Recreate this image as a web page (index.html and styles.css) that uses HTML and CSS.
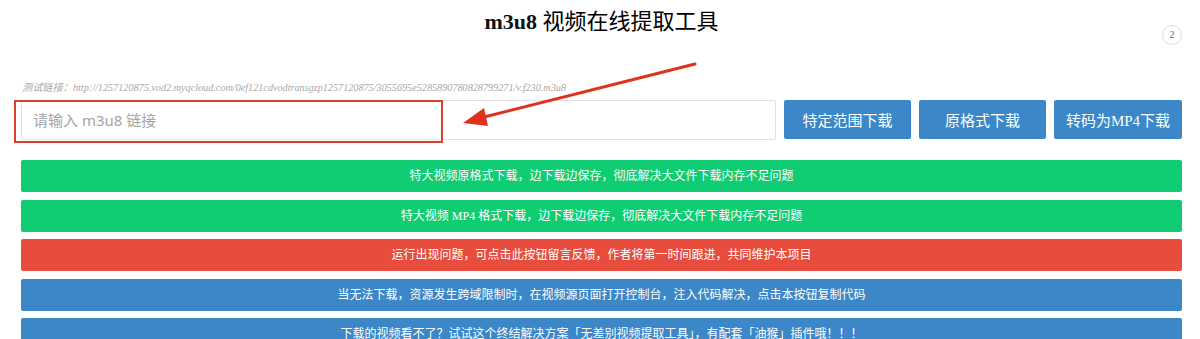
FILE: index.html
```html
<!DOCTYPE html>
<html lang="zh-CN">

<head>
    <meta charset="UTF-8">
    <title>m3u8 视频在线提取工具</title>
    <link rel="stylesheet" href="styles.css">
</head>

<body>
    <div class="page">
        <div class="header">
            <h1 class="title">m3u8 <span class="title-cn">视频在线提取工具</span></h1>
            <span class="badge">2</span>
        </div>

        <p class="test-link">测试链接：http://1257120875.vod2.myqcloud.com/0ef121cdvodtransgzp1257120875/3055695e5285890780828799271/v.f230.m3u8</p>

        <!-- 输入框 + 三个下载按钮 -->
        <div class="search-row">
            <input class="url-input" type="text" placeholder="请输入 m3u8 链接">
            <button class="btn">特定范围下载</button>
            <button class="btn">原格式下载</button>
            <button class="btn">转码为MP4下载</button>
        </div>

        <div class="bars">
            <div class="bar green">特大视频原格式下载，边下载边保存，彻底解决大文件下载内存不足问题</div>
            <div class="bar green">特大视频 MP4 格式下载，边下载边保存，彻底解决大文件下载内存不足问题</div>
            <div class="bar red">运行出现问题，可点击此按钮留言反馈，作者将第一时间跟进，共同维护本项目</div>
            <div class="bar blue">当无法下载，资源发生跨域限制时，在视频源页面打开控制台，注入代码解决，点击本按钮复制代码</div>
            <div class="bar blue">下载的视频看不了？试试这个终结解决方案「无差别视频提取工具」，有配套「油猴」插件哦！！！</div>
        </div>
    </div>

    <!-- 标注：红框和箭头 -->
    <div class="mark-box"></div>
    <svg class="mark-arrow" width="1200" height="339" viewBox="0 0 1200 339">
        <line x1="695" y1="64" x2="480" y2="118" stroke="#e0301e" stroke-width="3" stroke-linecap="round"/>
        <polygon points="463,123 484,108 488,126" fill="#e0301e"/>
    </svg>
</body>

</html>
```

FILE: styles.css
```css
body {
    margin: 0;
    padding: 0;
    background-color: #fff;
    font-family: "Liberation Serif", "Noto Sans CJK SC", serif;
    color: #222;
    overflow: hidden;
}

.page {
    padding: 0 18px 0 21px;
}

.header {
    position: relative;
    height: 44px;
}

.title {
    margin: 0;
    text-align: center;
    font-size: 22px;
    line-height: 44px;
    font-weight: bold;
    color: #111;
}

.title-cn {
    font-weight: normal;
    color: #000;
}

.badge {
    position: absolute;
    right: 0;
    top: 25px;
    width: 18px;
    height: 18px;
    border: 1px solid #ddd;
    border-radius: 50%;
    font-size: 10px;
    line-height: 18px;
    text-align: center;
    color: #666;
}

.test-link {
    margin: 37px 0 5px 1px;
    font-size: 10.2px;
    line-height: 14px;
    font-style: italic;
    color: #a8a8a8;
    white-space: nowrap;
}

/* 输入框 + 按钮 */
.search-row {
    display: flex;
    gap: 8px;
    height: 40px;
}

.url-input {
    flex: 1;
    box-sizing: border-box;
    height: 40px;
    border: 1px solid #e2e2e2;
    border-radius: 2px;
    padding: 0 11px;
    font-family: "Noto Sans", "Noto Sans CJK SC", sans-serif;
    font-size: 15px;
    color: #333;
    outline: none;
}

.url-input::placeholder {
    color: #a5a5a5;
}

.btn {
    width: 127px;
    height: 39px;
    border: none;
    border-radius: 2px;
    background-color: #3b87c7;
    color: #fff;
    font-family: "Liberation Serif", "Noto Sans CJK SC", serif;
    font-size: 15px;
    padding: 0;
    cursor: pointer;
}

.btn:last-child {
    width: 128px;
}

/* 功能按钮条 */
.bars {
    display: flex;
    flex-direction: column;
    gap: 7.5px;
    margin-top: 20px;
}

.bar {
    height: 32px;
    line-height: 32px;
    text-align: center;
    font-size: 12px;
    color: #fff;
    border-radius: 2px;
    cursor: pointer;
}

.green {
    background-color: #10cc72;
}

.red {
    background-color: #e74c3c;
}

.blue {
    background-color: #3b87c7;
}

.mark-box {
    position: absolute;
    left: 14px;
    top: 100px;
    width: 425px;
    height: 39px;
    border: 2px solid #d9402c;
}

.mark-arrow {
    position: absolute;
    left: 0;
    top: 0;
    pointer-events: none;
}
```
